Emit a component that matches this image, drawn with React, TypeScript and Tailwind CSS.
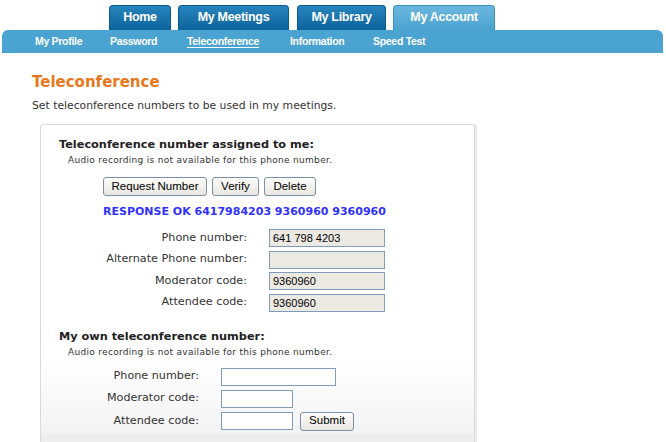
import React from 'react';

const tabs = [
  { label: 'Home', w: 'w-[62px]', ml: '' },
  { label: 'My Meetings', w: 'w-[111px]', ml: 'ml-[7px]' },
  { label: 'My Library', w: 'w-[89px]', ml: 'ml-[8px]' },
];

const subnav = [
  { label: 'My Profile', w: 'w-[75px]' },
  { label: 'Password', w: 'w-[77px]' },
  { label: 'Teleconference', w: 'w-[103px]', active: true },
  { label: 'Information', w: 'w-[83px]' },
  { label: 'Speed Test', w: '' },
];

const assigned = [
  { label: 'Phone number:', value: '641 798 4203' },
  { label: 'Alternate Phone number:', value: '' },
  { label: 'Moderator code:', value: '9360960' },
  { label: 'Attendee code:', value: '9360960' },
];

const Button: React.FC<{ label: string; w: string; className?: string }> = ({ label, w, className = '' }) => (
  <button
    className={`${w} h-[19px] rounded-[3px] border border-[#7b8fa8] bg-gradient-to-b from-[#fdfdfb] to-[#e8e6df] text-[11.5px] leading-none text-black font-['Liberation_Sans',sans-serif] ${className}`}
  >
    {label}
  </button>
);

export default function App() {
  return (
    <div className="w-[666px] h-[442px] overflow-hidden bg-white font-['DejaVu_Sans',sans-serif] text-[#333]">
      {/* Top tabs */}
      <div className="flex items-end h-[30px] pl-[109px]">
        {tabs.map((t) => (
          <div
            key={t.label}
            className={`${t.w} ${t.ml} h-[25px] rounded-t-[4px] border border-b-0 border-[#0b5a8c] bg-gradient-to-b from-[#2784bd] to-[#0c649c] flex items-center justify-center pb-[1px] text-white font-bold text-[12.5px] tracking-[-0.3px] font-['Liberation_Sans',sans-serif]`}
          >
            {t.label}
          </div>
        ))}
        <div className="w-[102px] ml-[7px] h-[25px] rounded-t-[4px] border border-b-0 border-[#3a8fbf] bg-gradient-to-b from-[#6ab7de] to-[#4aa3d0] flex items-center justify-center pb-[1px] text-white font-bold text-[12.5px] tracking-[-0.3px] font-['Liberation_Sans',sans-serif]">
          My Account
        </div>
      </div>

      {/* Sub navigation */}
      <div className="ml-[2px] w-[661px] h-[23px] rounded-t-[6px] bg-[#4aa3d0] flex items-center pl-[33px] text-white font-bold text-[10.5px] tracking-[-0.3px] font-['Liberation_Sans',sans-serif]">
        {subnav.map((s) => (
          <span key={s.label} className={`${s.w} ${s.active ? 'underline underline-offset-2' : ''}`}>
            {s.label}
          </span>
        ))}
      </div>

      {/* Content */}
      <div className="pl-[32px]">
        <h1 className="mt-[20px] text-[15px] leading-[18px] font-bold text-[#e8781c]">Teleconference</h1>
        <p className="mt-[8px] text-[10.8px] leading-[14px] text-[#333]">
          Set teleconference numbers to be used in my meetings.
        </p>

        <div className="mt-[11px] ml-[8px] w-[435px] h-[330px] rounded-[3px] border border-[#dadada] shadow-[2px_0_0_#ececec] flex flex-col">
          {/* Assigned section */}
          <div className="pl-[18px] pt-[12px]">
            <h2 className="text-[11.3px] leading-[15px] font-bold text-[#222]">Teleconference number assigned to me:</h2>
            <p className="mt-[3px] ml-[9px] text-[9px] tracking-[0.3px] leading-[11px] text-[#333]">
              Audio recording is not available for this phone number.
            </p>
            <div className="mt-[11px] ml-[44px] flex gap-[5px]">
              <Button label="Request Number" w="w-[104px]" />
              <Button label="Verify" w="w-[47px]" />
              <Button label="Delete" w="w-[52px]" />
            </div>
            <p className="mt-[9px] ml-[44px] text-[11px] leading-[14px] font-bold text-[#3232ff]">
              RESPONSE OK 6417984203 9360960 9360960
            </p>
            <div className="mt-[10px] flex flex-col gap-[3.5px]">
              {assigned.map((r) => (
                <div key={r.label} className="flex items-center">
                  <span className="w-[188px] text-right text-[11.2px] text-[#333]">{r.label}</span>
                  <input
                    readOnly
                    value={r.value}
                    className="ml-[22px] w-[116px] h-[18px] border border-[#7f9db9] bg-[#ece9e3] px-[3px] text-[11px] text-black font-['Liberation_Sans',sans-serif] outline-none"
                  />
                </div>
              ))}
            </div>
          </div>

          {/* Own section */}
          <div className="pl-[18px] mt-[17px]">
            <h2 className="text-[11.3px] leading-[15px] font-bold text-[#222]">My own teleconference number:</h2>
            <p className="mt-[3px] ml-[9px] text-[9px] tracking-[0.3px] leading-[11px] text-[#333]">
              Audio recording is not available for this phone number.
            </p>
          </div>
          <div className="mt-[1px] pl-[18px] pt-[9px] pb-[2px] bg-gradient-to-b from-white to-[#f3f3f3] flex flex-col gap-[4px]">
            <div className="flex items-center">
              <span className="w-[140px] text-right text-[11.2px]">Phone number:</span>
              <input className="ml-[22px] w-[115px] h-[18px] border border-[#7f9db9] bg-white outline-none" />
            </div>
            <div className="flex items-center">
              <span className="w-[140px] text-right text-[11.2px]">Moderator code:</span>
              <input className="ml-[22px] w-[72px] h-[18px] border border-[#7f9db9] bg-white outline-none" />
            </div>
            <div className="flex items-center">
              <span className="w-[140px] text-right text-[11.2px]">Attendee code:</span>
              <input className="ml-[22px] w-[72px] h-[18px] border border-[#7f9db9] bg-white outline-none" />
              <Button label="Submit" w="w-[54px]" className="ml-[7px]" />
            </div>
          </div>
          <div className="flex-1 bg-[#ededed]" />
        </div>
      </div>
    </div>
  );
}
